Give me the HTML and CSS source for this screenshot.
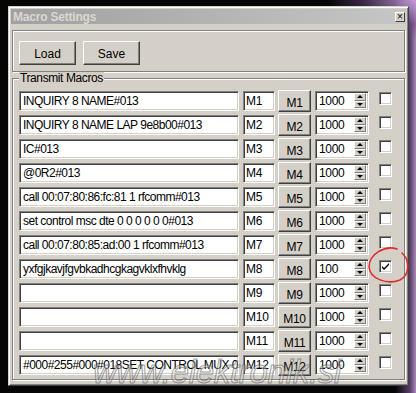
FILE: index.html
```html
<!DOCTYPE html>
<html lang="en">
<head>
  <meta charset="UTF-8" />
  <title>Macro Settings</title>
  <link rel="stylesheet" href="styles.css">
</head>
<body>

  <div class="window">
    <div class="titlebar">
      <span class="title">Macro Settings</span>
      <span class="close">&#215;</span>
    </div>

    <div class="client">
      <!-- Load / save -->
      <div class="group files">
        <button class="btn wide">Load</button>
        <button class="btn wide">Save</button>
      </div>

      <!-- Macro list -->
      <div class="group macros">
        <span class="legend">Transmit Macros</span>

        <div class="row">
          <div class="field text">INQUIRY 8 NAME#013</div>
          <div class="field name">M1</div>
          <button class="btn send">M1</button>
          <div class="field spin"><span>1000</span><span class="arrows"><i class="up"></i><i class="down"></i></span></div>
          <span class="check"></span>
        </div>
        <div class="row">
          <div class="field text">INQUIRY 8 NAME LAP 9e8b00#013</div>
          <div class="field name">M2</div>
          <button class="btn send">M2</button>
          <div class="field spin"><span>1000</span><span class="arrows"><i class="up"></i><i class="down"></i></span></div>
          <span class="check"></span>
        </div>
        <div class="row">
          <div class="field text">IC#013</div>
          <div class="field name">M3</div>
          <button class="btn send">M3</button>
          <div class="field spin"><span>1000</span><span class="arrows"><i class="up"></i><i class="down"></i></span></div>
          <span class="check"></span>
        </div>
        <div class="row">
          <div class="field text">@0R2#013</div>
          <div class="field name">M4</div>
          <button class="btn send">M4</button>
          <div class="field spin"><span>1000</span><span class="arrows"><i class="up"></i><i class="down"></i></span></div>
          <span class="check"></span>
        </div>
        <div class="row">
          <div class="field text">call 00:07:80:86:fc:81 1 rfcomm#013</div>
          <div class="field name">M5</div>
          <button class="btn send">M5</button>
          <div class="field spin"><span>1000</span><span class="arrows"><i class="up"></i><i class="down"></i></span></div>
          <span class="check"></span>
        </div>
        <div class="row">
          <div class="field text">set control msc dte 0 0 0 0 0 0#013</div>
          <div class="field name">M6</div>
          <button class="btn send">M6</button>
          <div class="field spin"><span>1000</span><span class="arrows"><i class="up"></i><i class="down"></i></span></div>
          <span class="check"></span>
        </div>
        <div class="row">
          <div class="field text">call 00:07:80:85:ad:00 1 rfcomm#013</div>
          <div class="field name">M7</div>
          <button class="btn send">M7</button>
          <div class="field spin"><span>1000</span><span class="arrows"><i class="up"></i><i class="down"></i></span></div>
          <span class="check"></span>
        </div>
        <div class="row">
          <div class="field text">yxfgjkavjfgvbkadhcgkagvklxfhvklg</div>
          <div class="field name">M8</div>
          <button class="btn send">M8</button>
          <div class="field spin"><span>100</span><span class="arrows"><i class="up"></i><i class="down"></i></span></div>
          <span class="check"><svg width="9" height="9" viewBox="0 0 9 9"><path d="M1 4 L3 6 L8 1 L8 3 L3 8 L1 6 Z" fill="#000"/></svg></span>
        </div>
        <div class="row">
          <div class="field text"></div>
          <div class="field name">M9</div>
          <button class="btn send">M9</button>
          <div class="field spin"><span>1000</span><span class="arrows"><i class="up"></i><i class="down"></i></span></div>
          <span class="check"></span>
        </div>
        <div class="row">
          <div class="field text"></div>
          <div class="field name">M10</div>
          <button class="btn send">M10</button>
          <div class="field spin"><span>1000</span><span class="arrows"><i class="up"></i><i class="down"></i></span></div>
          <span class="check"></span>
        </div>
        <div class="row">
          <div class="field text"></div>
          <div class="field name">M11</div>
          <button class="btn send">M11</button>
          <div class="field spin"><span>1000</span><span class="arrows"><i class="up"></i><i class="down"></i></span></div>
          <span class="check"></span>
        </div>
        <div class="row">
          <div class="field text">#000#255#000#018SET CONTROL MUX 0:0#013</div>
          <div class="field name">M12</div>
          <button class="btn send">M12</button>
          <div class="field spin"><span>1000</span><span class="arrows"><i class="up"></i><i class="down"></i></span></div>
          <span class="check"></span>
        </div>
      </div>
    </div>
  </div>

  <!-- hand drawn circle round the ticked box -->
  <svg class="scribble" width="50" height="42" viewBox="0 0 50 42">
    <path d="M34 3 C22 -1 6 8 6 21 C7 33 24 39 37 34 C47 29 47 14 39 7" fill="none" stroke="#e02a2a" stroke-width="1.6" stroke-linecap="round"/>
  </svg>

  <div class="watermark">www.elektronik.si</div>

</body>
</html>
```

FILE: styles.css
```css
body {
  margin: 0;
  width: 416px;
  height: 393px;
  overflow: hidden;
  position: relative;
  font-family: "Liberation Sans", Arial, sans-serif;
  font-size: 11px;
  color: #000;
  background:
    radial-gradient(ellipse 90px 40px at 100% 0, rgba(200,160,220,0.9), rgba(110,70,130,0.5) 60%, transparent),
    linear-gradient(to right, #050505 395px, #5a4068 410px, #a888b6 416px),
    #050505;
}

.window {
  box-sizing: border-box;
  width: 401px;
  height: 380px;
  margin: 6px 0 0 8px;
  padding: 2px;
  background-color: #d4d0c8;
  border: 1px solid;
  border-color: #d4d0c8 #404040 #404040 #d4d0c8;
  box-shadow: inset 1px 1px #fff, inset -1px -1px #808080;
}

.titlebar {
  height: 15px;
  display: flex;
  align-items: center;
  background: linear-gradient(to right, #a0a0a0, #c6c6c6);
}

.title {
  padding-left: 2px;
  font-size: 12px;
  font-weight: bold;
  letter-spacing: -0.2px;
  color: #dcd8d0;
}

.close {
  margin-left: auto;
  margin-right: 1px;
  width: 10px;
  height: 10px;
  box-sizing: border-box;
  background-color: #d4d0c8;
  border: 1px solid;
  border-color: #fff #404040 #404040 #fff;
  font-size: 10px;
  line-height: 7px;
  text-align: center;
}

.client {
  padding: 6px 1px 0 1px;
}

.group {
  box-sizing: border-box;
  position: relative;
  border: 1px solid #808080;
  box-shadow: inset 1px 1px #fff, 1px 1px #fff;
}

.files {
  height: 42px;
  padding: 10px 0 0 6px;
  display: flex;
  gap: 7px;
}

.macros {
  height: 302px;
  margin-top: 6px;
  padding: 12px 0 0 6px;
  display: flex;
  flex-direction: column;
  gap: 4px;
}

.legend {
  position: absolute;
  top: -7px;
  left: 6px;
  padding: 0 1px;
  font-size: 12px;
  letter-spacing: -0.4px;
  line-height: 13px;
  background-color: #d4d0c8;
}

.btn {
  box-sizing: border-box;
  margin: 0;
  padding: 0;
  font-family: inherit;
  font-size: 12px;
  color: #000;
  background-color: #d4d0c8;
  border: 1px solid;
  border-color: #fff #404040 #404040 #fff;
  box-shadow: inset -1px -1px #808080;
}

.btn.wide {
  width: 57px;
  height: 24px;
  padding-top: 2px;
}

.row {
  display: flex;
  height: 20px;
}

.field {
  box-sizing: border-box;
  height: 20px;
  padding: 2px 3px 0;
  line-height: 14px;
  font-size: 12px;
  white-space: nowrap;
  overflow: hidden;
  background-color: #fff;
  border: 1px solid;
  border-color: #808080 #fff #fff #808080;
  box-shadow: inset 1px 1px #404040, inset -1px -1px #d4d0c8;
}

.text {
  width: 220px;
  letter-spacing: -0.5px;
}

.name {
  width: 32px;
  margin-left: 4px;
  padding-left: 2px;
  letter-spacing: -0.2px;
}

.send {
  width: 33px;
  height: 22px;
  margin: -1px 0 0 3px;
  padding-top: 4px;
  letter-spacing: -0.3px;
}

.spin {
  width: 54px;
  margin-left: 4px;
  display: flex;
  justify-content: space-between;
  padding-right: 2px;
  letter-spacing: -0.3px;
}

.arrows {
  width: 12px;
  height: 15px;
  margin-top: -1px;
  display: flex;
  flex-direction: column;
  background-color: #d4d0c8;
}

.arrows i {
  flex: 1;
  box-sizing: border-box;
  border: 1px solid;
  border-color: #fff #808080 #808080 #fff;
  display: flex;
  align-items: center;
  justify-content: center;
}

.arrows i::after {
  content: "";
  border-left: 3px solid transparent;
  border-right: 3px solid transparent;
}

.arrows .up::after {
  border-bottom: 3px solid #000;
}

.arrows .down::after {
  border-top: 3px solid #000;
}

.check {
  box-sizing: border-box;
  width: 13px;
  height: 13px;
  margin: 1px 0 0 10px;
  display: flex;
  align-items: center;
  justify-content: center;
  background-color: #fff;
  border: 1px solid;
  border-color: #808080 #fff #fff #808080;
  box-shadow: inset 1px 1px #404040, inset -1px -1px #d4d0c8;
}

.scribble {
  position: absolute;
  left: 363px;
  top: 246px;
}

.watermark {
  position: absolute;
  left: 93px;
  top: 355px;
  font-size: 33px;
  line-height: 33px;
  font-style: italic;
  letter-spacing: -0.3px;
  white-space: nowrap;
  color: rgba(225, 225, 225, 0.4);
  -webkit-text-stroke: 1px rgba(70, 70, 70, 0.5);
}
```
